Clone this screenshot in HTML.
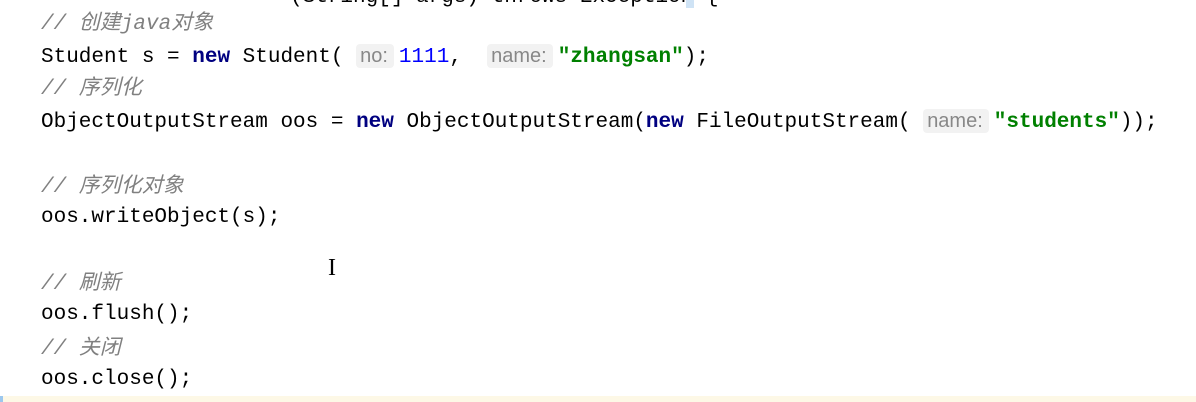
<!DOCTYPE html>
<html><head><meta charset="utf-8"><style>
body{margin:0;width:1196px;height:402px;background:#fff;overflow:hidden;position:relative;font-family:"Liberation Mono","Noto Sans CJK SC",monospace;font-size:21px;color:#000}
.l{position:absolute;left:41px;white-space:pre;line-height:24px}
.c{color:#808080;font-style:italic}
.k{color:#000080;font-weight:bold}
.n{color:#0000ff}
.s{color:#008000;font-weight:bold}
.h{font-family:"Liberation Sans",sans-serif;color:#888;background:#f2f2f2;border-radius:4px;padding:1px 6px 1px 4px;font-size:20px;margin-right:5px}
</style></head><body>
<div class="l" style="top:-14px;left:290px">(String[] args) throws Exception {</div>
<div style="position:absolute;left:686px;top:0;width:8px;height:8px;background:#cfe3f5"></div>
<div class="l c" style="top:13px">// 创建java对象</div>
<div class="l" style="top:44px">Student s = <span class="k">new</span> Student( <span class="h">no:</span><span class="n">1111</span>,  <span class="h">name:</span><span class="s">"zhangsan"</span>);</div>
<div class="l c" style="top:78px">// 序列化</div>
<div class="l" style="top:109px">ObjectOutputStream oos = <span class="k">new</span> ObjectOutputStream(<span class="k">new</span> FileOutputStream( <span class="h">name:</span><span class="s">"students"</span>));</div>
<div class="l c" style="top:176px">// 序列化对象</div>
<div class="l" style="top:206px">oos.writeObject(s);</div>
<div class="l" style="top:256px;left:328px;font-family:'Liberation Serif',serif;font-size:24px">I</div>
<div class="l c" style="top:273px">// 刷新</div>
<div class="l" style="top:303px">oos.flush();</div>
<div class="l c" style="top:338px">// 关闭</div>
<div class="l" style="top:368px">oos.close();</div>
<div style="position:absolute;left:0;top:396px;width:1196px;height:6px;background:#fdf8e6"></div>
<div style="position:absolute;left:0;top:396px;width:3px;height:6px;background:#9cc7ee"></div>
</body></html>
